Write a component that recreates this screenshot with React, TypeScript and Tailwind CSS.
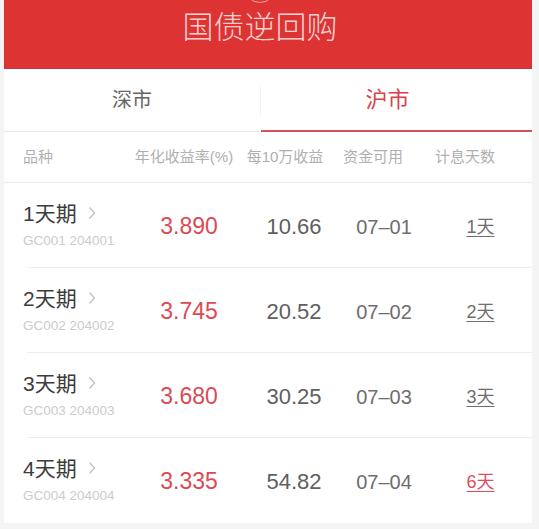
import React from 'react';

type Row = { name: string; code: string; rate: string; gain: string; date: string; days: string; hot?: boolean };

const rows: Row[] = [
  { name: '1天期', code: 'GC001 204001', rate: '3.890', gain: '10.66', date: '07–01', days: '1天' },
  { name: '2天期', code: 'GC002 204002', rate: '3.745', gain: '20.52', date: '07–02', days: '2天' },
  { name: '3天期', code: 'GC003 204003', rate: '3.680', gain: '30.25', date: '07–03', days: '3天' },
  { name: '4天期', code: 'GC004 204004', rate: '3.335', gain: '54.82', date: '07–04', days: '6天', hot: true },
];

const font = { fontFamily: '"Liberation Sans", "Noto Sans CJK SC", sans-serif' };

const Chevron = () => (
  <svg width="8" height="14" viewBox="0 0 8 14" className="ml-[11px] mt-[-2px]">
    <polyline points="1.5,1.5 6.5,7 1.5,12.5" fill="none" stroke="#bdbdbd" strokeWidth="1.2" />
  </svg>
);

export default function App() {
  return (
    <div className="w-[539px] h-[529px] bg-[#f4f4f4] overflow-hidden" style={font}>
      <div className="ml-[4px] w-[528px] bg-white">
        {/* 顶部标题 */}
        <div className="h-[69px] bg-[#dd3333] border-b border-[#c4344a] flex flex-col items-center pr-[16px] overflow-hidden">
          <div className="w-[32px] h-[32px] rounded-full border border-[#f0a0a0] mt-[-29px] shrink-0" />
          <div className="mt-[7px] text-[31px] leading-[36px] font-light text-[#f7d0d0]">国债逆回购</div>
        </div>

        {/* 市场切换 */}
        <div className="h-[63px] flex">
          <div className="w-[256px] flex items-center justify-center border-b border-[#e8e8e8]">
            <span className="text-[20px] text-[#666]">深市</span>
          </div>
          <div className="flex items-center">
            <div className="w-px h-[30px] bg-[#f3f3f3]" />
          </div>
          <div className="flex-1 flex items-center justify-center pr-[18px] border-b-2 border-[#d6505a]">
            <span className="text-[22px] text-[#d9414a]">沪市</span>
          </div>
        </div>

        {/* 表头 */}
        <div className="h-[51px] flex items-center border-b border-[#eeeeee] text-[15px] text-[#b0b0b0] whitespace-nowrap">
          <div className="w-[120px] pl-[19px]">品种</div>
          <div className="w-[120px] flex justify-center">年化收益率(%)</div>
          <div className="w-[82px] flex justify-center">每10万收益</div>
          <div className="w-[94px] flex justify-center">资金可用</div>
          <div className="flex-1 flex justify-center pr-[22px]">计息天数</div>
        </div>

        {/* 列表 */}
        {rows.map((r, i) => (
          <div key={i} className="relative h-[85px] flex items-center whitespace-nowrap">
            <div className="w-[135px] pl-[19px] flex flex-col">
              <div className="flex items-center text-[21px] leading-[24px] text-[#3c3c3c]">
                {r.name}
                <Chevron />
              </div>
              <div className="mt-[7px] text-[13.5px] leading-[16px] text-[#cccccc]">{r.code}</div>
            </div>
            <div className="w-[100px] flex justify-center text-[23px] text-[#dc4a53] pt-[2px]">{r.rate}</div>
            <div className="w-[110px] flex justify-center text-[22px] text-[#606060] pt-[2px]">{r.gain}</div>
            <div className="w-[70px] flex justify-center text-[20px] text-[#6e6e6e] pt-[2px]">{r.date}</div>
            <div className="flex-1 flex justify-center pl-[10px] pt-[3px]">
              <span
                className={`text-[18px] underline underline-offset-[3px] ${r.hot ? 'text-[#d9505c]' : 'text-[#6e6e6e]'}`}
              >
                {r.days}
              </span>
            </div>
            {i < rows.length - 1 && (
              <div className="absolute left-[23px] right-0 bottom-0 h-px bg-[#efefef]" />
            )}
          </div>
        ))}
      </div>
    </div>
  );
}
